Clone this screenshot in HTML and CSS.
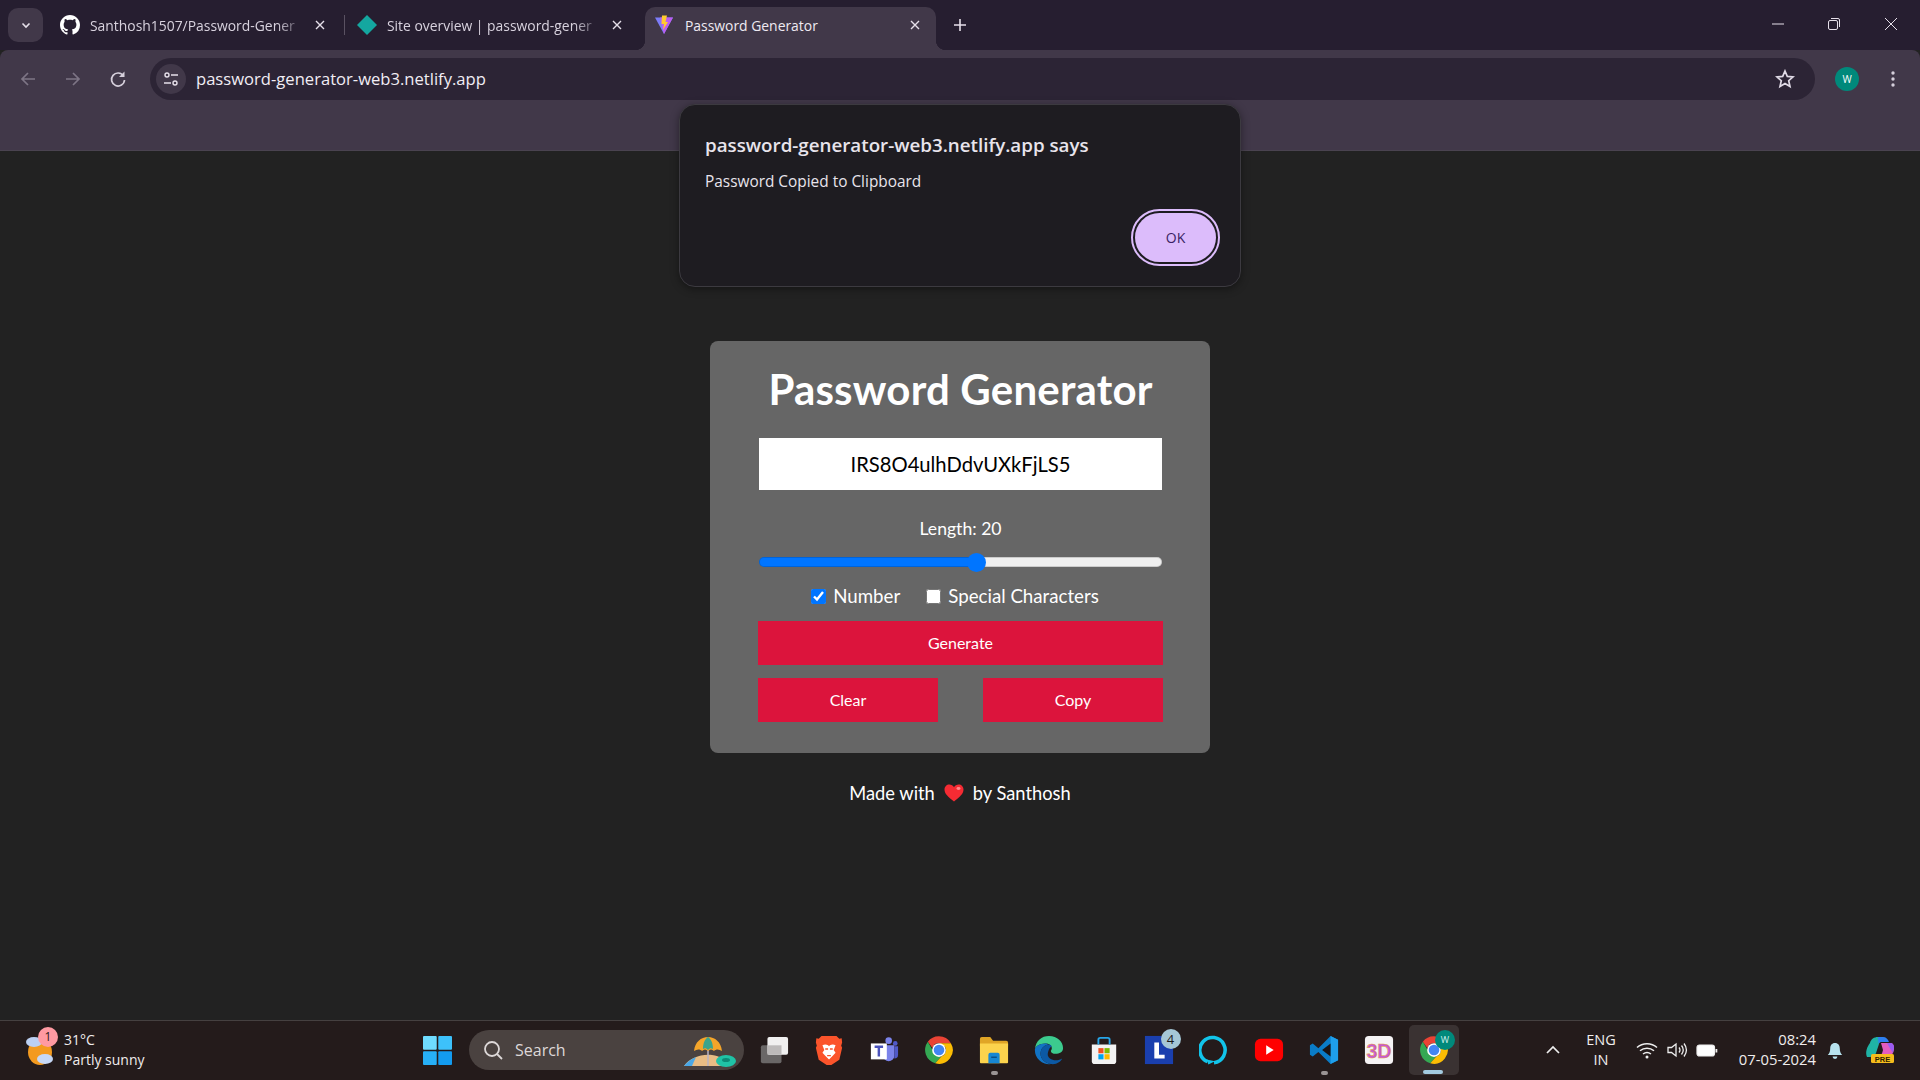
FILE: index.html

```html
<!DOCTYPE html>
<html lang="en">
<head>
    <meta charset="UTF-8">
    <meta name="viewport" content="width=device-width, initial-scale=1.0">
    <title>Password Generator</title>
    <link rel="stylesheet" href="styles.css">
</head>
<body>
    <svg class="defs" aria-hidden="true">
        <symbol id="chrome" viewBox="0 0 48 48">
            <path fill="#ea4335" d="M24 2a22 22 0 0 1 19 11H24a11 11 0 0 0-10.500 7.600L6.100 10.800A22 22 0 0 1 24 2z"/>
            <path fill="#34a853" d="M6.100 10.800 15.500 27a11 11 0 0 0 12.200 7.400L18 45.200A22 22 0 0 1 6.100 10.800z"/>
            <path fill="#fbbc04" d="M43 13a22 22 0 0 1-25 32.200L27.700 34.400A11 11 0 0 0 33.500 18.500L24 13z"/>
            <circle cx="24" cy="24" r="11" fill="#fff"/>
            <circle cx="24" cy="24" r="8.500" fill="#4285f4"/>
        </symbol>
        <symbol id="closex" viewBox="0 0 12 12">
            <path d="M2 2l8 8M10 2l-8 8" fill="none" stroke="currentColor" stroke-width="1.400"/>
        </symbol>
    </svg>

    <!-- browser tabs -->
    <div class="tabstrip">
        <div class="tab-list">
            <svg width="10" height="10" viewBox="0 0 10 10"><path d="M1.500 3.500 5 7l3.500-3.500" fill="none" stroke="#e6e0ea" stroke-width="1.600"/></svg>
        </div>
        <div class="tab tab-first">
            <svg class="favicon" viewBox="0 0 16 16"><path fill="#fff" d="M8 0C3.580 0 0 3.580 0 8c0 3.540 2.290 6.530 5.470 7.590.4.070.55-.17.55-.38 0-.19-.01-.82-.01-1.490-2.010.37-2.530-.49-2.690-.94-.09-.23-.48-.94-.82-1.130-.28-.15-.68-.52-.01-.53.63-.01 1.080.58 1.230.82.72 1.210 1.870.87 2.330.66.07-.52.28-.87.51-1.070-1.780-.2-3.640-.89-3.640-3.950 0-.87.31-1.590.82-2.150-.08-.2-.36-1.020.08-2.120 0 0 .67-.21 2.200.82.64-.18 1.320-.27 2-.27.68 0 1.360.09 2 .27 1.530-1.040 2.200-.82 2.200-.82.44 1.100.16 1.920.08 2.120.51.56.82 1.270.82 2.150 0 3.070-1.870 3.750-3.650 3.950.29.25.54.73.54 1.480 0 1.070-.01 1.930-.01 2.200 0 .21.15.46.55.38A8.013 8.013 0 0 0 16 8c0-4.420-3.580-8-8-8z"/></svg>
            <span class="tab-title">Santhosh1507/Password-Gener</span>
            <svg class="tab-close"><use href="#closex"/></svg>
        </div>
        <div class="tab-sep"></div>
        <div class="tab">
            <svg class="favicon" viewBox="0 0 20 20"><path fill="#14a7a0" d="M10 0l10 10-10 10L0 10z"/></svg>
            <span class="tab-title">Site overview | password-gener</span>
            <svg class="tab-close"><use href="#closex"/></svg>
        </div>
        <div class="tab tab-active">
            <svg class="favicon" viewBox="0 0 20 20">
                <path fill="#7c7cf8" d="M1 2.500h18L10 19z"/>
                <path fill="#bd5cf0" d="M6 2.500h13L10 19z"/>
                <path fill="#ffcb2e" d="M8 0.500h5l-1.500 6.500h2.500L9 15l1-6H7.500z"/>
            </svg>
            <span class="tab-title">Password Generator</span>
            <svg class="tab-close"><use href="#closex"/></svg>
        </div>
        <svg class="new-tab" viewBox="0 0 14 14"><path d="M7 1v12M1 7h12" stroke="#e6e0ea" stroke-width="1.600"/></svg>
        <div class="win-controls">
            <svg width="14" height="14" viewBox="0 0 14 14"><path d="M1 7h12" stroke="#e6e0ea"/></svg>
            <svg width="14" height="14" viewBox="0 0 14 14"><rect x="1.500" y="3.500" width="9" height="9" rx="1.500" fill="none" stroke="#e6e0ea"/><path d="M4 1.500h7a1.500 1.500 0 0 1 1.500 1.500v7" fill="none" stroke="#e6e0ea"/></svg>
            <svg class="win-close" width="14" height="14" viewBox="0 0 14 14"><path d="M1 1l12 12M13 1 1 13" stroke="#e6e0ea"/></svg>
        </div>
    </div>

    <!-- address bar -->
    <div class="toolbar">
        <div class="nav-btn">
            <svg width="18" height="18" viewBox="0 0 18 18"><path d="M16 9H3M9 3 3 9l6 6" fill="none" stroke="#7d7585" stroke-width="1.700"/></svg>
        </div>
        <div class="nav-btn">
            <svg width="18" height="18" viewBox="0 0 18 18"><path d="M2 9h13M9 3l6 6-6 6" fill="none" stroke="#7d7585" stroke-width="1.700"/></svg>
        </div>
        <div class="nav-btn">
            <svg width="18" height="18" viewBox="0 0 18 18"><path d="M14.500 6A6.500 6.500 0 1 0 15.500 10" fill="none" stroke="#d5cfdb" stroke-width="1.700"/><path d="M15.500 1.500V7H10z" fill="#d5cfdb"/></svg>
        </div>
        <div class="omnibox">
            <div class="site-chip">
                <svg width="16" height="16" viewBox="0 0 16 16"><circle cx="4" cy="4" r="2" fill="none" stroke="#e6e0ea" stroke-width="1.400"/><path d="M8 4h7M1 12h7" stroke="#e6e0ea" stroke-width="1.400"/><circle cx="12" cy="12" r="2" fill="none" stroke="#e6e0ea" stroke-width="1.400"/></svg>
            </div>
            <span class="url">password-generator-web3.netlify.app</span>
            <svg class="star" viewBox="0 0 20 20"><path d="M10 2l2.300 5.400 5.700.5-4.300 3.800 1.300 5.700L10 14.400 5 17.400l1.300-5.700L2 7.900l5.700-.5z" fill="none" stroke="#e0dae6" stroke-width="1.700"/></svg>
        </div>
        <div class="avatar">W</div>
        <svg class="menu" viewBox="0 0 20 20"><circle cx="10" cy="4" r="1.700" fill="#d5cfdb"/><circle cx="10" cy="10" r="1.700" fill="#d5cfdb"/><circle cx="10" cy="16" r="1.700" fill="#d5cfdb"/></svg>
    </div>

    <!-- the page itself -->
    <main class="page">
        <div class="card">
            <h1>Password Generator</h1>
            <input class="password" type="text" value="IRS8O4ulhDdvUXkFjLS5" readonly>
            <label class="length-label">Length: 20</label>
            <input class="slider" type="range" min="0" max="1000" value="542">
            <div class="options">
                <label class="option"><input type="checkbox" checked> Number</label>
                <label class="option"><input type="checkbox"> Special Characters</label>
            </div>
            <button class="btn btn-wide">Generate</button>
            <div class="btn-row">
                <button class="btn">Clear</button>
                <button class="btn">Copy</button>
            </div>
        </div>
        <p class="made-with">Made with
            <svg class="heart" viewBox="0 0 20 18"><path fill="#f52b33" d="M10 17.500C4 13 .5 9.600.5 5.500.5 2.600 2.700.5 5.300.5 7.200.5 9 1.500 10 3.200 11 1.500 12.800.5 14.700.5c2.600 0 4.800 2.100 4.800 5 0 4.100-3.500 7.500-9.500 12z"/><ellipse cx="14.500" cy="4.500" rx="2" ry="1.400" fill="#ff8a8a"/></svg>
            by Santhosh</p>

        <div class="dialog">
            <div class="dialog-title">password-generator-web3.netlify.app says</div>
            <div class="dialog-msg">Password Copied to Clipboard</div>
            <div class="dialog-actions"><button class="ok">OK</button></div>
        </div>
    </main>

    <!-- windows taskbar -->
    <footer class="taskbar">
        <div class="weather">
            <div class="weather-icon">
                <svg width="32" height="36" viewBox="0 0 32 36">
                    <ellipse cx="15" cy="20" rx="12" ry="13" fill="#f39a1f"/>
                    <ellipse cx="9" cy="10" rx="8" ry="5" fill="#bcd0f2"/>
                    <ellipse cx="20" cy="27" rx="8" ry="5" fill="#c6d8f6"/>
                </svg>
                <span class="badge">1</span>
            </div>
            <div class="weather-text">
                <div class="temp">31°C</div>
                <div>Partly sunny</div>
            </div>
        </div>

        <svg class="start" viewBox="0 0 30 30">
            <rect x="0" y="0" width="14.200" height="14.200" rx="1" fill="#6fdcff"/>
            <rect x="15.800" y="0" width="14.200" height="14.200" rx="1" fill="#3dc1fb"/>
            <rect x="0" y="15.800" width="14.200" height="14.200" rx="1" fill="#27b0f7"/>
            <rect x="15.800" y="15.800" width="14.200" height="14.200" rx="1" fill="#139bef"/>
        </svg>

        <div class="search">
            <svg width="22" height="22" viewBox="0 0 22 22"><circle cx="10" cy="10" r="7" fill="none" stroke="#ddd8d8" stroke-width="1.800"/><path d="M15 15l5 5" stroke="#ddd8d8" stroke-width="1.800"/></svg>
            <span class="search-text">Search</span>
            <svg class="search-art" width="56" height="34" viewBox="0 0 56 34">
                <path d="M2 32C8 24 18 20 30 21c8 1 14 5 16 11z" fill="#e8bd85"/>
                <path d="M2 32c3-4 7-7 12-9l-4 9z" fill="#4aa8e8"/>
                <path d="M26 6v26" stroke="#b9b4c4" stroke-width="1.500"/>
                <path d="M12 17C13 8 19 3 26 3s13 5 14 14c-3-2-6-2-8 0-2-2-4-2-6 0-2-2-4-2-6 0-2-2-5-2-8 0z" fill="#f4a52a"/>
                <path d="M21 15c0-6 2-10 5-12 3 2 5 6 5 12-2-1-3-1-5 1-2-2-3-2-5-1z" fill="#3ba48c"/>
                <ellipse cx="44" cy="27" rx="10" ry="6" fill="#1fc2a6"/>
                <ellipse cx="44" cy="26" rx="4" ry="2" fill="#0d8a78"/>
            </svg>
        </div>

        <div class="task-icons">
            <div class="task">
                <svg viewBox="0 0 32 32">
                    <rect x="2" y="11" width="22" height="19" rx="2" fill="#6a6767"/>
                    <rect x="9" y="2" width="22" height="19" rx="2" fill="#f1f0f0"/>
                    <rect x="9" y="11" width="15" height="10" fill="#bdbaba"/>
                </svg>
            </div>
            <div class="task">
                <svg viewBox="0 0 32 32">
                    <path d="M8 1h16l3 3 2.500-.5L30 8l-1 3.500 1 2-3 13-8.500 5.500h-5L5 26.500l-3-13 1-2L2 8l.5-4.500L5 4z" fill="#fb542b"/>
                    <path d="M9 11c2-1 4-1 6 0l1 1 1-1c2-1 4-1 6 0l-2 5 2 3-3 3-4 4-4-4-3-3 2-3z" fill="#fff"/>
                    <path d="M12 15h3M17 15h3M14 22h4" stroke="#fb542b" stroke-width="1.500"/>
                </svg>
            </div>
            <div class="task">
                <svg viewBox="0 0 32 32">
                    <circle cx="21" cy="6" r="3.500" fill="#7b83eb"/>
                    <circle cx="28" cy="9" r="2.500" fill="#5059c9"/>
                    <path d="M15 11h12v11a6 6 0 0 1-12 0z" fill="#7b83eb"/>
                    <path d="M27 12h4v9a4 4 0 0 1-4 4z" fill="#5059c9"/>
                    <rect x="2" y="9" width="17" height="17" fill="#fff"/>
                    <path d="M6 12.500h9M10.500 12.500V23" stroke="#4b53bc" stroke-width="2.600"/>
                </svg>
            </div>
            <div class="task"><svg viewBox="0 0 48 48"><use href="#chrome"/></svg></div>
            <div class="task">
                <svg viewBox="0 0 32 32">
                    <path d="M1 4a2 2 0 0 1 2-2h9l3 4h14a2 2 0 0 1 2 2v4H1z" fill="#e0a526"/>
                    <path d="M1 9h30v20a1 1 0 0 1-1 1H2a1 1 0 0 1-1-1z" fill="#fcd34d"/>
                    <path d="M10 21a2 2 0 0 1 2-2h8a2 2 0 0 1 2 2v9H10z" fill="#1787d4"/>
                    <rect x="13" y="23" width="6" height="1.500" fill="#0b4f86"/>
                </svg>
                <span class="run-dot"></span>
            </div>
            <div class="task">
                <svg viewBox="0 0 32 32">
                    <path d="M1 15C2 6 8 1 16 1c9 0 15 6 15 13 0 4-4 6-8 6-3 0-5-1-5-3 0-1 1-1 1-3 0-3-3-5-7-5-6 0-10 3-11 6z" fill="#3ccb8e"/>
                    <path d="M1 15c1-3 5-6 11-6 1 0 2 0 3 1-5 1-8 5-8 10 0 5 4 10 11 11A15 15 0 0 1 1 15z" fill="#1273c4"/>
                    <path d="M7 20c0 5 4 10 11 11 6 1 11-3 12-6-3 2-9 3-13 0-2-2-3-4-2-7 1-3 2-5 4-6-1-2-3-2-4-2-5 1-8 5-8 10z" fill="#0c59a4"/>
                </svg>
            </div>
            <div class="task">
                <svg viewBox="0 0 32 32">
                    <path d="M3 10h26v18a3 3 0 0 1-3 3H6a3 3 0 0 1-3-3z" fill="#f3f3f3"/>
                    <path d="M10 10V5a2 2 0 0 1 2-2h8a2 2 0 0 1 2 2v5" fill="none" stroke="#27a5e8" stroke-width="2"/>
                    <rect x="10" y="14" width="5.500" height="5.500" fill="#f25022"/>
                    <rect x="16.500" y="14" width="5.500" height="5.500" fill="#7fba00"/>
                    <rect x="10" y="20.500" width="5.500" height="5.500" fill="#00a4ef"/>
                    <rect x="16.500" y="20.500" width="5.500" height="5.500" fill="#ffb900"/>
                </svg>
            </div>
            <div class="task">
                <svg viewBox="0 0 32 32">
                    <rect x="1" y="1" width="30" height="30" fill="#1a3fae"/>
                    <path d="M11 8h5v13h6v4H11z" fill="#fff"/>
                </svg>
                <span class="count">4</span>
            </div>
            <div class="task">
                <svg viewBox="0 0 32 32"><path d="M9 28.500A13.500 13.500 0 1 1 16 29.500" fill="none" stroke="#12c4ea" stroke-width="3.800"/><path d="M8 26l9 2-7 3.500z" fill="#12c4ea"/></svg>
            </div>
            <div class="task">
                <svg viewBox="0 0 32 32"><rect x="1" y="4" width="30" height="24" rx="6" fill="#f00"/><path d="M13 11l8 5-8 5z" fill="#fff"/></svg>
            </div>
            <div class="task">
                <svg viewBox="0 0 32 32">
                    <path d="M23 1l8 4v22l-8 4-13-13-6 5-3-2V11l3-2 6 5z" fill="#0a7cc7"/>
                    <path d="M23 1l8 4v22l-8 4z" fill="#1e9fec"/>
                    <path d="M23 9v14l-9-7z" fill="#1a1414"/>
                </svg>
                <span class="run-dot"></span>
            </div>
            <div class="task">
                <svg viewBox="0 0 32 32">
                    <rect x="1" y="1" width="30" height="30" rx="4" fill="#f5f3f4"/>
                    <text x="16" y="24" class="three-d">3D</text>
                </svg>
            </div>
            <div class="task task-active">
                <svg viewBox="0 0 48 48"><use href="#chrome"/></svg>
                <span class="mini-avatar">W</span>
                <span class="run-bar"></span>
            </div>
        </div>

        <div class="tray">
            <svg class="chevron" viewBox="0 0 16 10"><path d="M2 8l6-6 6 6" fill="none" stroke="#eee" stroke-width="1.700"/></svg>
            <div class="lang">ENG<br>IN</div>
            <svg class="tray-icon" viewBox="0 0 22 18"><path d="M1 6.500c5.500-5 14.500-5 20 0M4 9.800c4-3.400 10-3.400 14 0M7 13c2.400-1.800 5.600-1.800 8 0" fill="none" stroke="#eee" stroke-width="1.500"/><circle cx="11" cy="16" r="1.500" fill="#eee"/></svg>
            <svg class="tray-icon" viewBox="0 0 22 18"><path d="M2 6.500h3.500L10 3v12l-4.500-3.500H2z" fill="none" stroke="#eee" stroke-width="1.300"/><path d="M13 6.500c1.200 1.500 1.200 3.500 0 5M15.500 4.500c2.200 2.800 2.200 6.200 0 9M18 2.500c3 4 3 9 0 13" fill="none" stroke="#eee" stroke-width="1.300"/></svg>
            <svg class="tray-icon" viewBox="0 0 22 18"><rect x="1" y="4" width="17.500" height="11" rx="2.500" fill="#fff" stroke="#eee" stroke-width="1.200"/><rect x="19.500" y="8" width="1.800" height="3.500" fill="#eee"/></svg>
            <div class="clock">08:24<br>07-05-2024</div>
            <svg class="bell" viewBox="0 0 20 22"><path d="M10 1c4 0 6 3 6 7 0 4 1 6 3 8H1c2-2 3-4 3-8 0-4 2-7 6-7z" fill="#b7e2ee"/><path d="M7 18a3 3 0 0 0 6 0z" fill="#b7e2ee"/></svg>
            <svg class="copilot" viewBox="0 0 30 28">
                <path d="M5 7c1-4 4-6 8-6h6c-3 1-4 3-5 7l-3 9c-1 3-3 4-6 4H2c-2-5 0-10 3-14z" fill="#1fb3a5"/>
                <path d="M13 1h5c3 0 5 2 6 5h-8c-1 0-2 1-2.500 2z" fill="#2e7ff0"/>
                <path d="M16 7h9c3 0 4 2 4 5 0 4-2 9-7 9h-9c3-1 4-3 5-7z" fill="#e35cc0"/>
                <path d="M22 7h3c3 0 4 2 4 5l-1 5c-2-3-4-6-6-10z" fill="#9a5cf0"/>
                <rect x="6" y="18" width="23" height="9" rx="1.500" fill="#f5bc1c"/>
                <text x="17.500" y="25.500" class="pre">PRE</text>
            </svg>
        </div>
    </footer>
</body>
</html>
```

FILE: styles.css

```css
* {
    box-sizing: border-box;
}

html, body {
    width: 100%;
    height: 100%;
}

body {
    margin: 0;
    display: flex;
    flex-direction: column;
    overflow: hidden;
    background: #222222;
    font-family: "Open Sans", "Noto Sans", sans-serif;
}

.defs {
    width: 0;
    height: 0;
    position: absolute;
}

/* tabs */
.tabstrip {
    height: 50px;
    flex: none;
    display: flex;
    align-items: flex-end;
    padding-left: 8px;
    background: #261e30;
    color: #e6e0ea;
}

.tab-list {
    width: 35px;
    height: 34px;
    margin: 0 8px 8px 0;
    border-radius: 10px;
    background: #413849;
    display: flex;
    align-items: center;
    justify-content: center;
}

.tab {
    width: 297px;
    height: 43px;
    padding: 0 18px 7px 9px;
    display: flex;
    align-items: center;
    font-size: 13.900px;
    color: #d8d2de;
}

.tab-first {
    width: 293px;
    padding-right: 14px;
}

.tab-sep {
    width: 1px;
    height: 20px;
    margin: 0 3px 15px 0;
    background: #5a5262;
}

.favicon {
    width: 20px;
    height: 20px;
    flex: none;
    margin-right: 10px;
}

.tab-title {
    flex: 1;
    min-width: 0;
    overflow: hidden;
    white-space: nowrap;
    -webkit-mask-image: linear-gradient(to right, #000 85%, transparent 98%);
    mask-image: linear-gradient(to right, #000 85%, transparent 98%);
}

.tab-close {
    width: 12px;
    height: 12px;
    margin: 0 4px;
    flex: none;
    color: #e6e0ea;
}

.tab-active {
    width: 291px;
    padding-right: 11px;
    background: #413849;
    border-radius: 10px 10px 0 0;
    color: #efeaf2;
    position: relative;
}

.tab-active .favicon {
    margin-right: 11px;
}

.tab-active .tab-title {
    -webkit-mask-image: none;
    mask-image: none;
}

.tab-active::before,
.tab-active::after {
    content: "";
    position: absolute;
    bottom: 0;
    width: 10px;
    height: 10px;
}

.tab-active::before {
    left: -10px;
    background: radial-gradient(circle at 0 0, transparent 10px, #413849 10.500px);
}

.tab-active::after {
    right: -10px;
    background: radial-gradient(circle at 100% 0, transparent 10px, #413849 10.500px);
}

.new-tab {
    width: 14px;
    height: 14px;
    margin: 0 0 18px 17px;
}

.win-controls {
    margin-left: auto;
    display: flex;
    align-items: center;
    gap: 42px;
    padding: 0 22px 19px 0;
}

.win-close {
    margin-left: 1px;
}

/* address bar */
.toolbar {
    height: 100px;
    flex: none;
    display: flex;
    align-items: flex-start;
    padding: 8px 0 0 5px;
    background: #413849;
    border-radius: 8px 8px 0 0;
}

.nav-btn {
    width: 45px;
    height: 42px;
    display: flex;
    align-items: center;
    justify-content: center;
}

.omnibox {
    width: 1665px;
    height: 42px;
    margin-left: 10px;
    padding-left: 6px;
    display: flex;
    align-items: center;
    border-radius: 21px;
    background: #2c2435;
}

.site-chip {
    width: 30px;
    height: 30px;
    margin-right: 10px;
    border-radius: 50%;
    background: #413849;
    display: flex;
    align-items: center;
    justify-content: center;
}

.url {
    margin-top: -2px;
    font-size: 16.600px;
    color: #f1edf4;
}

.star {
    width: 20px;
    height: 20px;
    margin: 0 20px 0 auto;
}

.avatar {
    width: 24px;
    height: 24px;
    margin: 9px 0 0 20px;
    border-radius: 50%;
    background: #00897b;
    color: #fff;
    font-size: 10px;
    display: flex;
    align-items: center;
    justify-content: center;
}

.menu {
    width: 20px;
    height: 20px;
    margin: 11px 0 0 24px;
}

/* page */
.page {
    flex: 1;
    min-height: 0;
    position: relative;
    display: flex;
    flex-direction: column;
    align-items: center;
    padding-top: 190px;
    background: #222222;
    border-top: 1px solid #4a4350;
    font-family: Lato, sans-serif;
    color: #fff;
}

.card {
    width: 500px;
    height: 412px;
    padding: 26px 47px 0 48px;
    border-radius: 8px;
    background: #666666;
    text-align: center;
}

.card h1 {
    margin: 0 0 27px;
    font-size: 42px;
    letter-spacing: 0.200px;
    line-height: 44px;
    font-weight: 700;
}

.password {
    display: block;
    width: 403px;
    height: 52px;
    margin: 0 1px;
    padding-bottom: 2px;
    border: 0;
    outline: 0;
    background: #fff;
    text-align: center;
    font-family: Lato, sans-serif;
    font-size: 20.200px;
    color: #000;
}

.length-label {
    display: block;
    margin-top: 28px;
    font-size: 17.600px;
    line-height: 22px;
}

.slider {
    -webkit-appearance: none;
    appearance: none;
    display: block;
    width: 403px;
    height: 10px;
    margin: 17px 1px 0;
    border-radius: 5px;
    background: linear-gradient(to right, #0075ff 54%, #efefef 54%);
    box-shadow: inset 0 0 0 1px rgba(0, 0, 0, 0.15);
}

.slider::-webkit-slider-thumb {
    -webkit-appearance: none;
    width: 19px;
    height: 19px;
    border-radius: 50%;
    background: #0075ff;
}

.options {
    height: 20px;
    margin-top: 19px;
    padding-right: 11px;
    display: flex;
    align-items: center;
    justify-content: center;
    gap: 26px;
    font-size: 18.700px;
}

.option {
    display: flex;
    align-items: center;
    gap: 7px;
}

.option input {
    width: 15px;
    height: 15px;
    margin: 0;
    accent-color: #0075ff;
}

.btn {
    width: 180px;
    height: 44px;
    padding-bottom: 3px;
    border: 0;
    background: #dc143c;
    color: #fff;
    font-family: Lato, sans-serif;
    font-size: 16px;
}

.btn-wide {
    display: block;
    width: 405px;
    margin-top: 15px;
}

.btn-row {
    display: flex;
    justify-content: space-between;
    margin-top: 13px;
}

.made-with {
    margin: 28px 0 0;
    display: flex;
    align-items: center;
    gap: 9px;
    font-size: 18.300px;
    line-height: 24px;
}

.heart {
    width: 20px;
    height: 18px;
}

/* alert box */
.dialog {
    position: absolute;
    top: -47px;
    left: 679px;
    width: 562px;
    height: 183px;
    padding: 28px 25px 0;
    border: 1px solid #3c3a40;
    border-radius: 16px;
    background: #1e1c21;
    box-shadow: 0 2px 8px rgba(0, 0, 0, 0.4);
    font-family: "Open Sans", sans-serif;
    color: #e8e4ec;
}

.dialog-title {
    font-size: 18.750px;
    line-height: 24px;
    font-weight: 600;
}

.dialog-msg {
    margin-top: 14px;
    font-size: 15.400px;
    line-height: 22px;
}

.dialog-actions {
    display: flex;
    justify-content: flex-end;
    margin: 16px -5px 0 0;
}

.ok {
    width: 81px;
    height: 49px;
    margin: 4px;
    border: 0;
    border-radius: 25px;
    background: #dcbcfb;
    outline: 2px solid #dcbcfb;
    outline-offset: 2px;
    color: #3a1f63;
    font-family: "Open Sans", sans-serif;
    font-size: 14px;
}

/* taskbar */
.taskbar {
    height: 60px;
    flex: none;
    display: flex;
    align-items: center;
    position: relative;
    padding-bottom: 1px;
    background: #241b1b;
    border-top: 1px solid #454040;
    color: #f0eded;
}

.weather {
    width: 423px;
    padding-left: 25px;
    display: flex;
    align-items: center;
    gap: 7px;
}

.weather-icon {
    width: 32px;
    height: 36px;
    position: relative;
}

.badge {
    position: absolute;
    top: -5px;
    left: 13px;
    width: 20px;
    height: 20px;
    border-radius: 50%;
    background: #ff9aa2;
    color: #2a1a1a;
    font-size: 12px;
    line-height: 20px;
    text-align: center;
}

.weather-text {
    font-size: 14px;
    line-height: 20px;
}

.start {
    width: 29px;
    height: 29px;
    flex: none;
}

.search {
    width: 275px;
    height: 40px;
    margin-left: 17px;
    padding-left: 13px;
    display: flex;
    align-items: center;
    position: relative;
    border-radius: 20px;
    background: #4a4240;
}

.search-text {
    margin-left: 11px;
    font-size: 16px;
    color: #ddd8d8;
}

.search-art {
    position: absolute;
    right: 6px;
    top: 4px;
}

.task-icons {
    display: flex;
    margin-left: 2.500px;
}

.task {
    width: 55px;
    height: 50px;
    flex: none;
    display: flex;
    align-items: center;
    justify-content: center;
    position: relative;
}

.task svg {
    width: 30px;
    height: 30px;
}

.task-active {
    width: 50px;
    margin-left: 2.500px;
    border-radius: 5px;
    background: #3a3232;
}

.run-dot {
    position: absolute;
    left: 50%;
    bottom: 0;
    width: 7px;
    height: 4px;
    margin-left: -3.500px;
    border-radius: 2px;
    background: #9a9494;
}

.run-bar {
    position: absolute;
    left: 14px;
    bottom: 1px;
    width: 20px;
    height: 4px;
    border-radius: 2px;
    background: #a3cbe0;
}

.count {
    position: absolute;
    top: 4px;
    right: 6px;
    width: 20px;
    height: 20px;
    border-radius: 50%;
    background: #a5c7d6;
    color: #1a1a1a;
    font-size: 13px;
    line-height: 20px;
    text-align: center;
}

.mini-avatar {
    position: absolute;
    top: 5px;
    right: 4px;
    width: 20px;
    height: 20px;
    border-radius: 50%;
    background: #00897b;
    color: #d5f0ec;
    font-size: 9px;
    line-height: 20px;
    text-align: center;
}

.three-d {
    font-family: "Liberation Sans", sans-serif;
    font-weight: 700;
    font-size: 21px;
    text-anchor: middle;
    fill: #c65ad0;
    stroke: #e6a040;
    stroke-width: 0.500px;
}

.tray {
    display: flex;
    align-items: center;
    margin-left: auto;
}

.chevron {
    width: 16px;
    height: 10px;
}

.lang {
    width: 50px;
    margin: 0 10px 0 15px;
    text-align: center;
    font-size: 14.500px;
    line-height: 20px;
}

.tray-icon {
    width: 22px;
    height: 18px;
    margin-right: 8px;
}

.clock {
    width: 90px;
    padding-bottom: 2px;
    text-align: right;
    font-size: 14.800px;
    line-height: 20px;
}

.bell {
    width: 16px;
    height: 20px;
    margin: 2px 0 0 11px;
}

.copilot {
    width: 30px;
    height: 28px;
    margin: 0 25px 0 22px;
}

.pre {
    font-family: "Liberation Sans", sans-serif;
    font-weight: 700;
    font-size: 7.500px;
    text-anchor: middle;
    fill: #2a2000;
}
```
